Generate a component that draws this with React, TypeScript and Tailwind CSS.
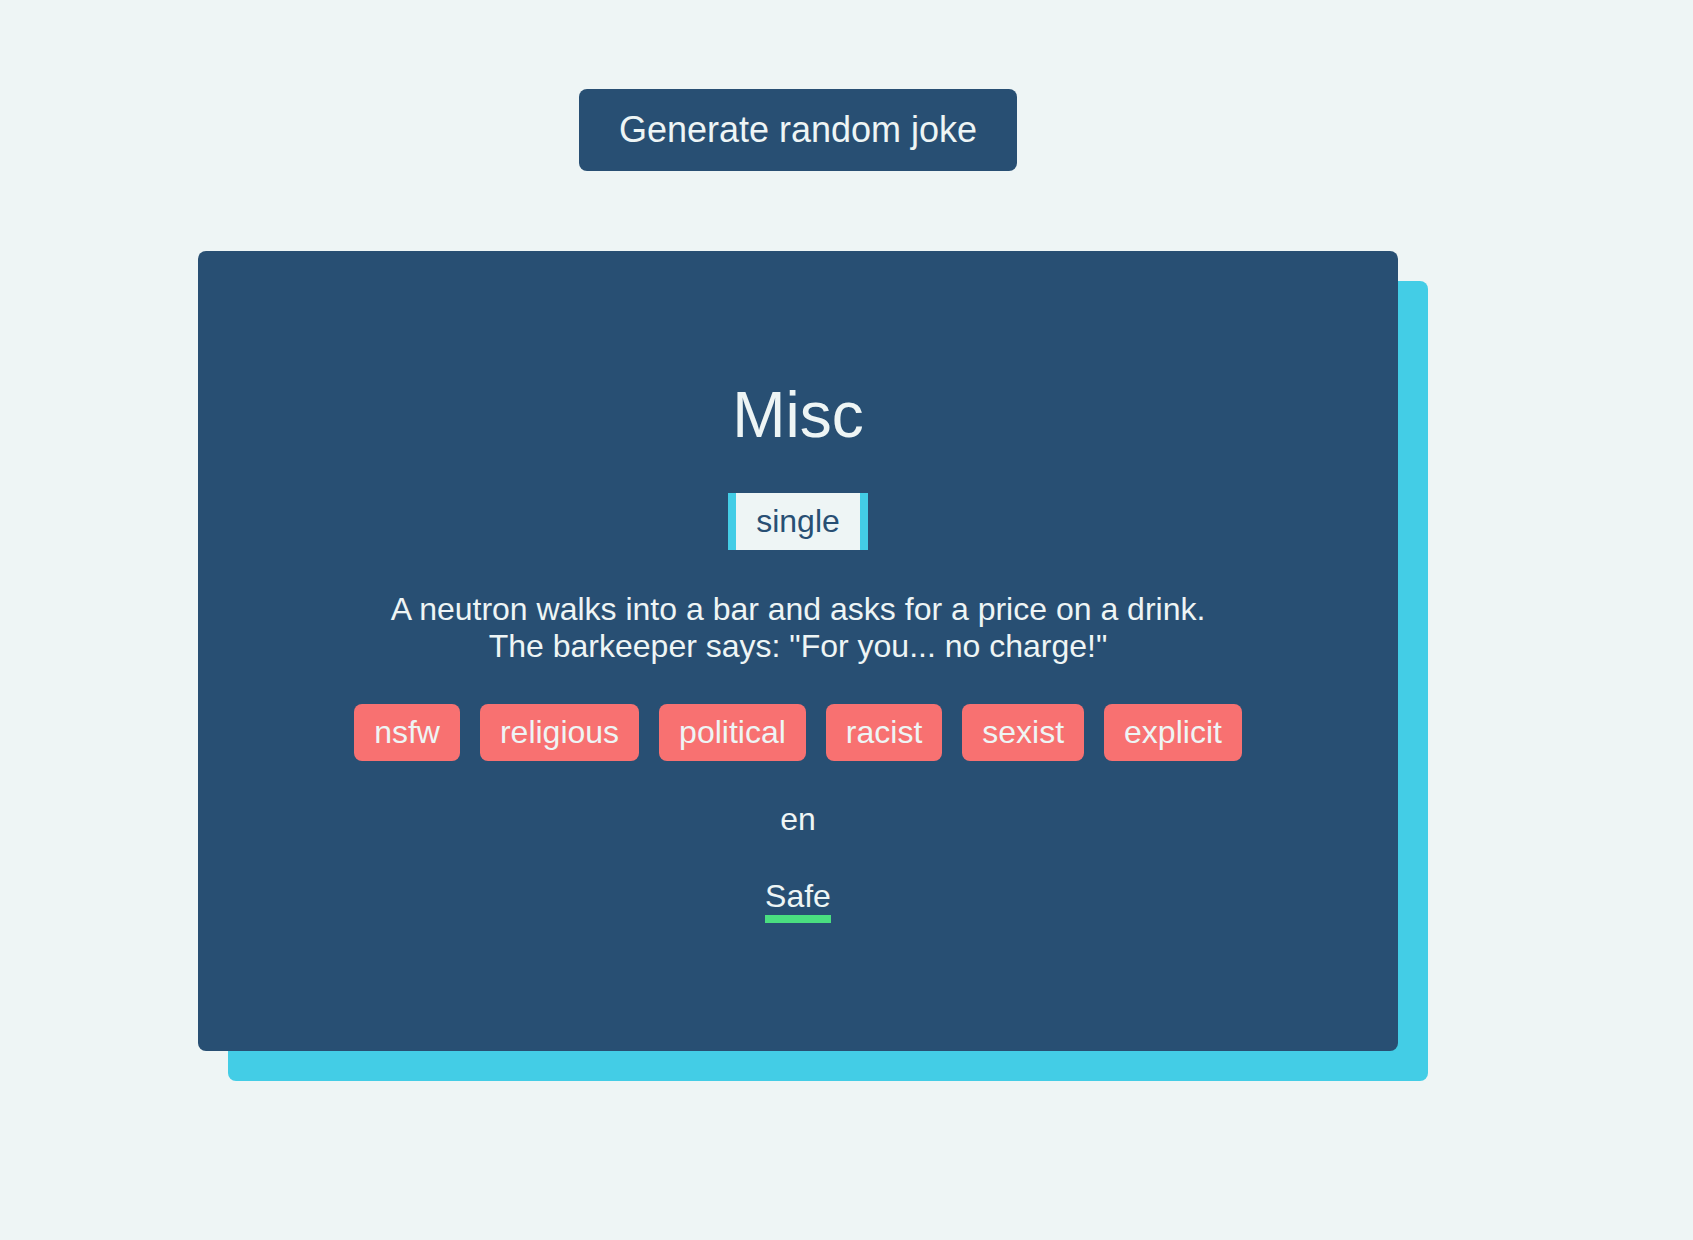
import React from 'react';

const flags = ['nsfw', 'religious', 'political', 'racist', 'sexist', 'explicit'];

const App: React.FC = () => {
  return (
    <div className="min-h-screen w-full bg-[#eef5f5] pt-[89px] pl-[198px] font-['Liberation_Sans',Arial,sans-serif]">
      <div className="w-[1200px] flex flex-col items-center">
        {/* Generate button */}
        <button className="bg-[#284f73] text-[#eef5f5] text-[36px] leading-[42px] px-[40px] py-[20px] rounded-lg">
          Generate random joke
        </button>

        {/* Joke card */}
        <div className="mt-[80px] w-[1200px] h-[800px] bg-[#284f73] rounded-lg shadow-[30px_30px_0_0_#43cde6] flex flex-col items-center pt-[127px] text-[#eef5f5]">
          <h1 className="text-[64px] leading-[74px]">Misc</h1>

          <div className="mt-[41px] bg-[#eef5f5] text-[#284f73] text-[32px] leading-[37px] px-[20px] py-[10px] border-x-8 border-[#43cde6]">
            single
          </div>

          <p className="mt-[41px] text-[32px] leading-[37px] text-center">
            A neutron walks into a bar and asks for a price on a drink.
            <br />
            The barkeeper says: "For you... no charge!"
          </p>

          <div className="mt-[39px] flex gap-[20px]">
            {flags.map(f => (
              <span
                key={f}
                className="bg-[#f87171] text-[#eef5f5] text-[32px] leading-[37px] px-[20px] py-[10px] rounded-lg"
              >
                {f}
              </span>
            ))}
          </div>

          <div className="mt-[40px] text-[32px] leading-[37px]">en</div>

          <div className="mt-[40px] text-[32px] leading-[37px] border-b-8 border-[#4ade80]">
            Safe
          </div>
        </div>
      </div>
    </div>
  );
};

export default App;
